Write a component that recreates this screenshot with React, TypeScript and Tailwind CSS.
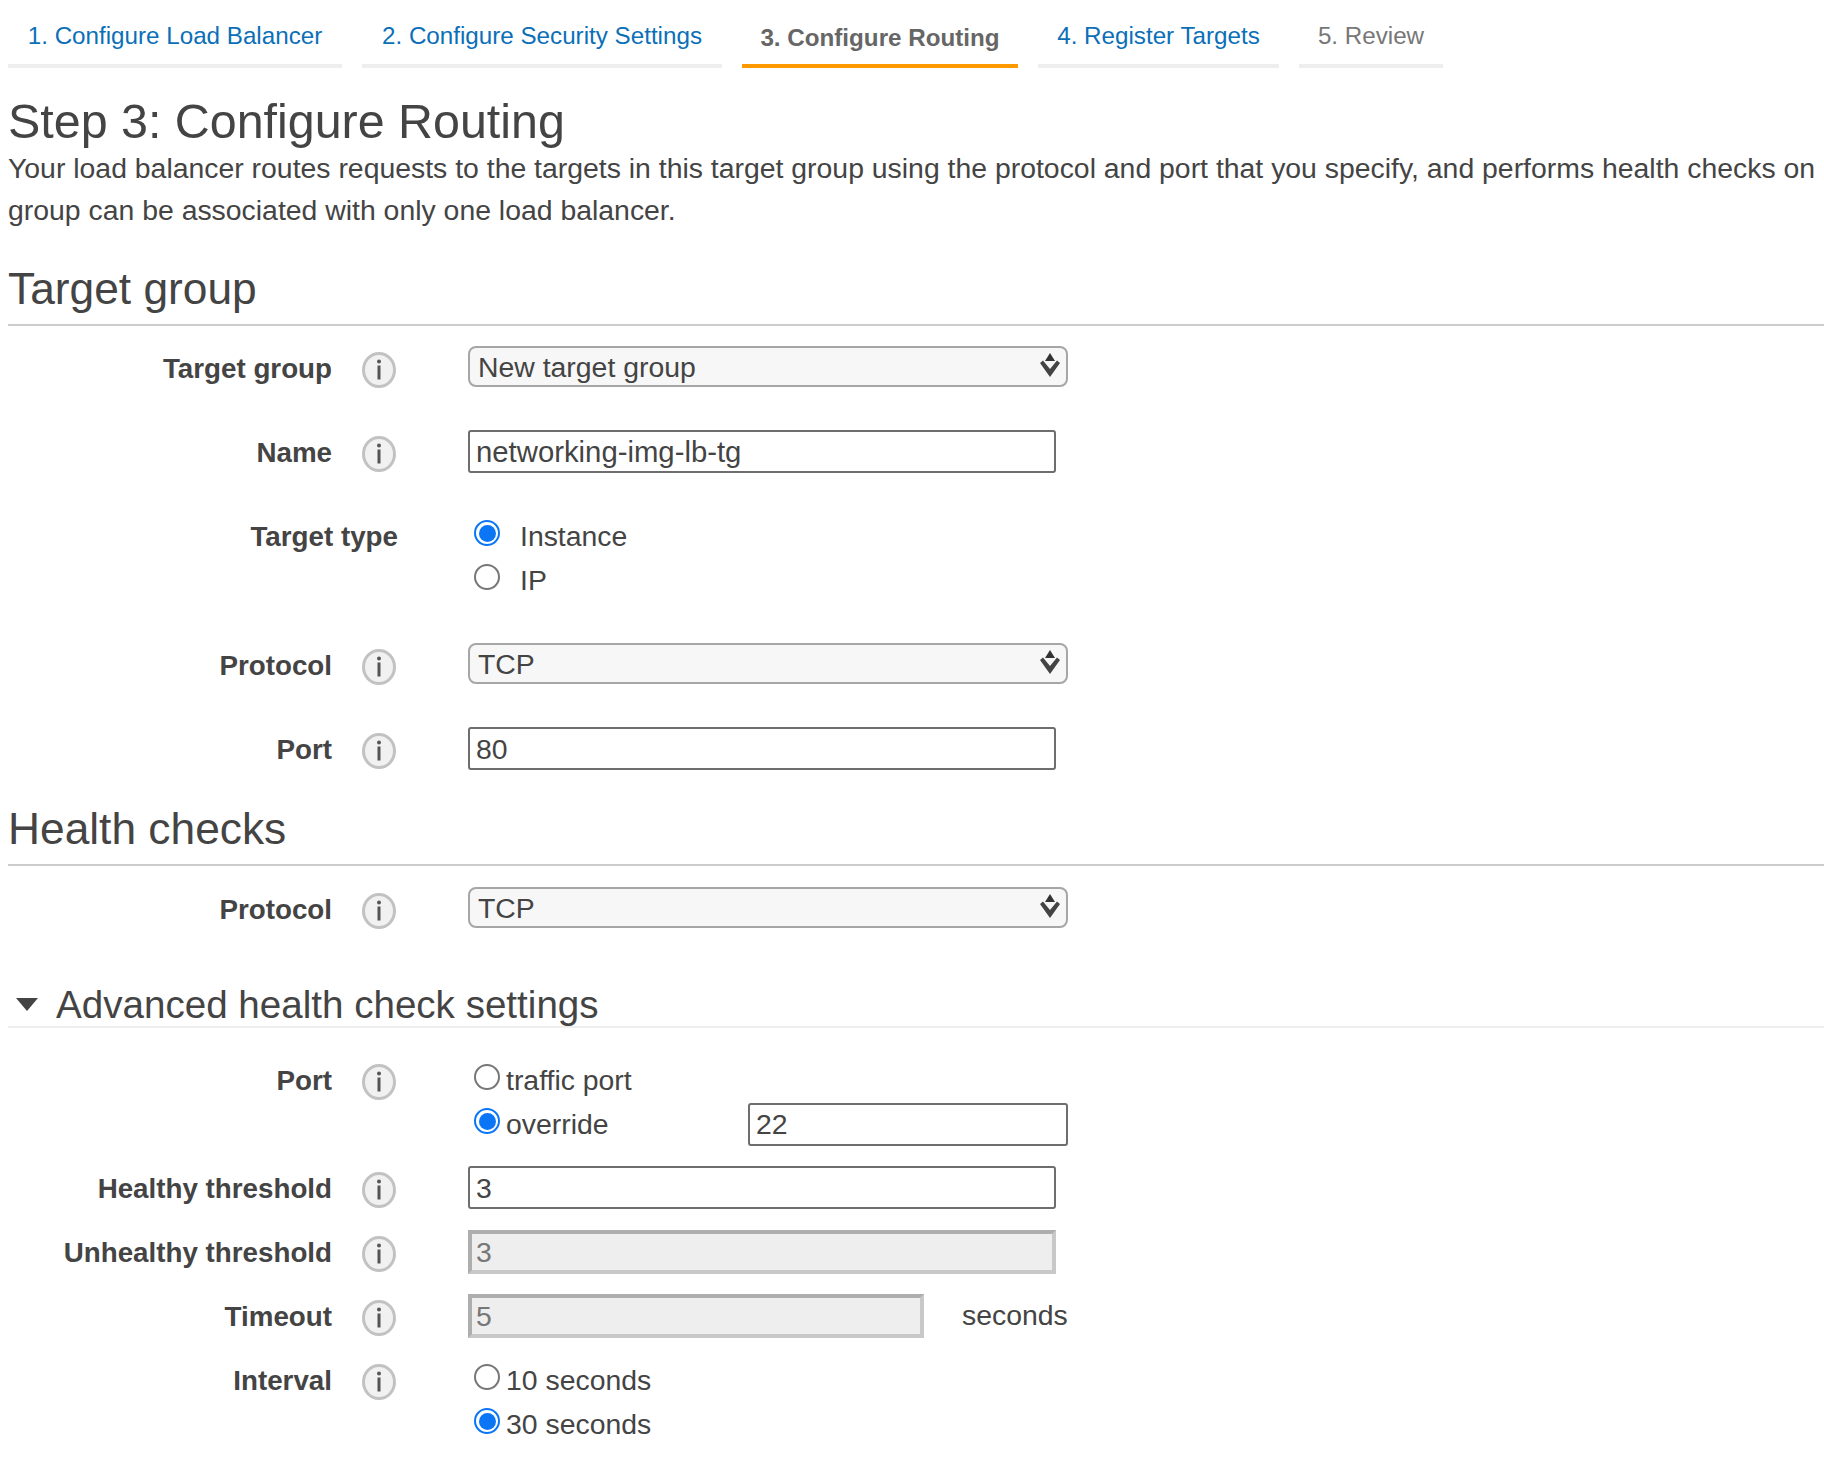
import React from 'react';

const font = { fontFamily: '"Liberation Sans", Arial, sans-serif' };

function InfoIcon() {
  return (
    <svg width="36" height="38" viewBox="0 0 36 38" className="mt-[5px] ml-[29px] shrink-0 blur-[0.5px]">
      <ellipse cx="18" cy="19" rx="15.5" ry="16.5" fill="#f1f1f1" stroke="#c2c2c2" strokeWidth="3" />
      <circle cx="18" cy="10.5" r="2" fill="#555555" />
      <rect x="16.5" y="14.5" width="3" height="14" fill="#555555" />
    </svg>
  );
}

function SelectArrows() {
  return (
    <svg width="20" height="24" viewBox="0 0 20 24" className="absolute right-[6px] top-[5px]">
      <path d="M10 0 L15 8 H5 Z" fill="#333333" />
      <path d="M0 10 L3 7.5 L10 16 L17 7.5 L20 10 L10 24 Z" fill="#444444" />
    </svg>
  );
}

function Select({ value }: { value: string }) {
  return (
    <div className="relative flex h-[41px] w-[600px] items-center rounded-[8px] border-2 border-[#a6a6a6] bg-[#f7f7f7] pt-[2px] pl-[8px] text-[#444]">
      {value}
      <SelectArrows />
    </div>
  );
}

function TextBox({ value, width = 'w-[588px]' }: { value: React.ReactNode; width?: string }) {
  return (
    <div className={`flex h-[43px] items-center rounded-[3px] border-2 border-[#6e6e6e] bg-white pt-[1px] pl-[6px] text-[#444] ${width}`}>
      {value}
    </div>
  );
}

function DisabledBox({ value, width }: { value: string; width: string }) {
  return (
    <div className={`flex h-[44px] items-center border-[4px] border-[#c8c8c8] border-t-[#aeaeae] border-l-[#aeaeae] bg-[#eeeeee] pl-[4px] text-[#777] ${width}`}>
      {value}
    </div>
  );
}

function Radio({ checked }: { checked?: boolean }) {
  return checked ? (
    <span className="flex h-[26px] w-[26px] shrink-0 items-center justify-center rounded-full border-2 border-[#0a76f6] bg-white">
      <span className="h-[17px] w-[17px] rounded-full bg-[#0a76f6]" />
    </span>
  ) : (
    <span className="block h-[26px] w-[26px] shrink-0 rounded-full border-2 border-[#777] bg-white" />
  );
}

function Label({ text, info = true }: { text: string; info?: boolean }) {
  return (
    <div className="flex h-[40px] w-[468px] shrink-0 items-start justify-end">
      <span className={`font-bold whitespace-nowrap text-[27.75px] leading-[46px] text-[#444] ${info ? '' : 'mr-[70px]'}`}>{text}</span>
      {info && <InfoIcon />}
      {info && <span className="w-[71px] shrink-0" />}
    </div>
  );
}

function RadioRow({ label, checked, gap = 'gap-[6px]' }: { label: string; checked?: boolean; gap?: string }) {
  return (
    <div className={`flex h-[44px] items-center pl-[6px] whitespace-nowrap text-[#444] ${gap}`}>
      <span className="-mt-[6px] block">
        <Radio checked={checked} />
      </span>
      <span>{label}</span>
    </div>
  );
}

function SectionTitle({ text }: { text: string }) {
  return (
    <div className="ml-[8px] border-b-[2px] border-[#cccccc] pb-[9px] text-[44.3px] leading-[52px] text-[#444]">
      {text}
    </div>
  );
}

const tabs = [
  { label: '1. Configure Load Balancer', width: 'w-[334px]', cls: 'pt-[9px] text-[#0b6fb8] border-[#eeeeee]' },
  { label: '2. Configure Security Settings', width: 'w-[360px]', cls: 'pt-[9px] text-[#0b6fb8] border-[#eeeeee]' },
  { label: '3. Configure Routing', width: 'w-[276px]', cls: 'pt-[12px] font-bold text-[#666] border-[#f90]' },
  { label: '4. Register Targets', width: 'w-[241px]', cls: 'pt-[9px] text-[#0b6fb8] border-[#eeeeee]' },
  { label: '5. Review', width: 'w-[144px]', cls: 'pt-[9px] text-[#777] border-[#eeeeee]' },
];

export default function App() {
  return (
    <div className="h-[1468px] w-[1824px] overflow-hidden bg-white text-[28.4px]" style={font}>
      {/* Wizard steps */}
      <div className="flex gap-[20px] pl-[8px]">
        {tabs.map(tab => (
          <div
            key={tab.label}
            className={`flex h-[68px] items-center justify-center whitespace-nowrap border-b-[4px] text-[24.2px] ${tab.width} ${tab.cls}`}
          >
            {tab.label}
          </div>
        ))}
      </div>

      <div className="mt-[27px] ml-[8px] text-[48.4px] leading-[52px] text-[#444]">Step 3: Configure Routing</div>
      <div className="ml-[8px] whitespace-nowrap leading-[42px] text-[#444]">
        Your load balancer routes requests to the targets in this target group using the protocol and port that you specify, and performs health checks on
        <br />
        group can be associated with only one load balancer.
      </div>

      <div className="mt-[32px]">
        <SectionTitle text="Target group" />
      </div>

      <div className="mt-[20px] flex">
        <Label text="Target group" />
        <Select value="New target group" />
      </div>
      <div className="mt-[43px] flex">
        <Label text="Name" />
        <TextBox value={<span className="text-[29.3px]">networking-img-lb-tg</span>} />
      </div>
      <div className="mt-[41px] flex">
        <Label text="Target type" info={false} />
        <div>
          <RadioRow label="Instance" checked gap="gap-[20px]" />
          <RadioRow label="IP" gap="gap-[20px]" />
        </div>
      </div>
      <div className="mt-[41px] flex">
        <Label text="Protocol" />
        <Select value="TCP" />
      </div>
      <div className="mt-[43px] flex">
        <Label text="Port" />
        <TextBox value="80" />
      </div>

      <div className="mt-[33px]">
        <SectionTitle text="Health checks" />
      </div>
      <div className="mt-[21px] flex">
        <Label text="Protocol" />
        <Select value="TCP" />
      </div>

      {/* Advanced section */}
      <div className="mt-[56px] ml-[8px] flex items-center border-b-[2px] border-[#eeeeee] text-[38.6px] leading-[42px] text-[#444]">
        <svg width="22" height="13" viewBox="0 0 22 13" className="ml-[8px] mr-[18px] -mt-[2px] shrink-0">
          <path d="M0 0 H22 L11 13 Z" fill="#444444" />
        </svg>
        Advanced health check settings
      </div>

      <div className="mt-[30px] flex">
        <Label text="Port" />
        <div className="w-[600px]">
          <RadioRow label="traffic port" />
          <div className="flex items-center justify-between">
            <RadioRow label="override" checked />
            <TextBox value="22" width="w-[320px]" />
          </div>
        </div>
      </div>
      <div className="mt-[20px] flex">
        <Label text="Healthy threshold" />
        <TextBox value="3" />
      </div>
      <div className="mt-[21px] flex">
        <Label text="Unhealthy threshold" />
        <DisabledBox value="3" width="w-[588px]" />
      </div>
      <div className="mt-[20px] flex">
        <Label text="Timeout" />
        <DisabledBox value="5" width="w-[456px]" />
        <span className="ml-[38px] leading-[42px] text-[#444]">seconds</span>
      </div>
      <div className="mt-[20px] flex">
        <Label text="Interval" />
        <div>
          <RadioRow label="10 seconds" />
          <RadioRow label="30 seconds" checked />
        </div>
      </div>
    </div>
  );
}
